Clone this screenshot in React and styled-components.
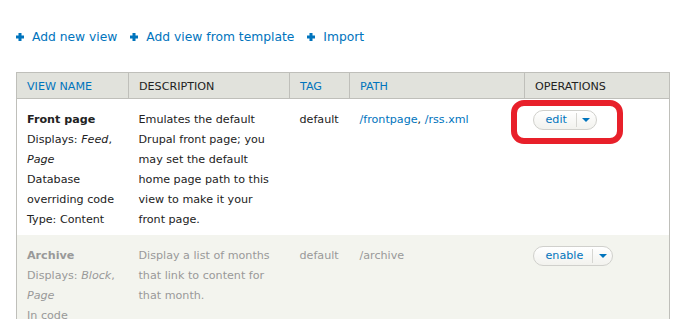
import React from "react";
import styled, { createGlobalStyle } from "styled-components";

const GlobalStyle = createGlobalStyle`
  body {
    margin: 0;
    background: #fff;
    font-family: "DejaVu Sans", Verdana, sans-serif;
    font-size: 11.15px;
    color: #222;
  }
`;

const Page = styled.div`
  padding: 27px 19px 0 16px;
`;

const ActionLinks = styled.ul`
  display: flex;
  gap: 13px;
  list-style: none;
  margin: 0 0 25px;
  padding: 0;
  line-height: 20px;
  font-size: 12.3px;
`;

const ActionLink = styled.li`
  display: flex;
  align-items: center;
  gap: 8px;
  color: #0074bd;
`;

const Plus = styled.svg`
  width: 8px;
  height: 8px;
  fill: #0074bd;
`;

const Table = styled.table`
  width: 654px;
  border-collapse: collapse;
  table-layout: fixed;
  border: 1px solid #bfbfba;
  line-height: 20px;
`;

const Th = styled.th`
  background: #e1e2dc;
  border: 1px solid #bfbfba;
  text-align: left;
  font-weight: normal;
  text-transform: uppercase;
  padding: 4px 10px 1px;
  color: ${(p) => (p.$sortable ? "#0074bd" : "#222")};
`;

const Row = styled.tr`
  background: ${(p) => (p.$disabled ? "#f3f4ee" : "#fff")};
  color: ${(p) => (p.$disabled ? "#999" : "#222")};
`;

const Td = styled.td`
  vertical-align: top;
  padding: 11px ${(p) => (p.$tight ? "8px" : "10px")} 5px;
`;

const Name = styled.div`
  font-weight: bold;
`;

const PathLink = styled.span`
  color: ${(p) => (p.$disabled ? "#999" : "#0074bd")};
`;

const Wrap = styled.span`
  position: relative;
  display: inline-block;
`;

const Highlight = styled.span`
  position: absolute;
  left: -22px;
  top: -10px;
  width: 112px;
  height: 44px;
  box-sizing: border-box;
  border: 6px solid #e8202a;
  border-radius: 13px;
`;

const DropButton = styled.span`
  display: inline-flex;
  align-items: center;
  height: 20px;
  box-sizing: border-box;
  border: 1px solid #d0d0cc;
  border-radius: 10px;
  background: linear-gradient(#ffffff, #f2f2ee);
  color: #0074bd;
`;

const DropLabel = styled.span`
  padding: 0 9px 0 12px;
  line-height: 18px;
`;

const DropToggle = styled.span`
  display: flex;
  align-items: center;
  justify-content: center;
  width: 19px;
  height: 14px;
  border-left: 1px solid #d6d6d2;
  &::after {
    content: "";
    border-left: 4px solid transparent;
    border-right: 4px solid transparent;
    border-top: 4px solid #0074bd;
  }
`;

const PlusIcon = () => (
  <Plus viewBox="0 0 8 8">
    <path d="M2.5 0h3v2.5H8v3H5.5V8h-3V5.5H0v-3h2.5z" />
  </Plus>
);

const views = [
  {
    name: "Front page",
    displays: ["Feed", "Page"],
    storage: "Database overriding code",
    type: "Type: Content",
    description:
      "Emulates the default Drupal front page; you may set the default home page path to this view to make it your front page.",
    tag: "default",
    paths: ["/frontpage", "/rss.xml"],
    op: "edit",
  },
  {
    name: "Archive",
    displays: ["Block", "Page"],
    storage: "In code",
    description: "Display a list of months that link to content for that month.",
    tag: "default",
    paths: ["/archive"],
    op: "enable",
    disabled: true,
  },
];

export default function App() {
  return (
    <Page>
      <GlobalStyle />
      <ActionLinks>
        <ActionLink>
          <PlusIcon />
          Add new view
        </ActionLink>
        <ActionLink>
          <PlusIcon />
          Add view from template
        </ActionLink>
        <ActionLink>
          <PlusIcon />
          Import
        </ActionLink>
      </ActionLinks>
      <Table>
        <colgroup>
          <col style={{ width: 112 }} />
          <col style={{ width: 161 }} />
          <col style={{ width: 60 }} />
          <col style={{ width: 175 }} />
          <col />
        </colgroup>
        <thead>
          <tr>
            <Th $sortable>View name</Th>
            <Th>Description</Th>
            <Th $sortable>Tag</Th>
            <Th $sortable>Path</Th>
            <Th>Operations</Th>
          </tr>
        </thead>
        <tbody>
          {views.map((v, i) => (
            <Row key={v.name} $disabled={v.disabled}>
              <Td>
                <Name>{v.name}</Name>
                <div>
                  Displays: <em>{v.displays[0]}</em>, <em>{v.displays[1]}</em>
                </div>
                <div>{v.storage}</div>
                {v.type && <div>{v.type}</div>}
              </Td>
              <Td>{v.description}</Td>
              <Td>{v.tag}</Td>
              <Td>
                {v.paths.map((p, j) => (
                  <React.Fragment key={p}>
                    {j > 0 && ", "}
                    <PathLink $disabled={v.disabled}>{p}</PathLink>
                  </React.Fragment>
                ))}
              </Td>
              <Td $tight>
                <Wrap>
                  {i === 0 && <Highlight />}
                  <DropButton>
                    <DropLabel>{v.op}</DropLabel>
                    <DropToggle />
                  </DropButton>
                </Wrap>
              </Td>
            </Row>
          ))}
        </tbody>
      </Table>
    </Page>
  );
}
